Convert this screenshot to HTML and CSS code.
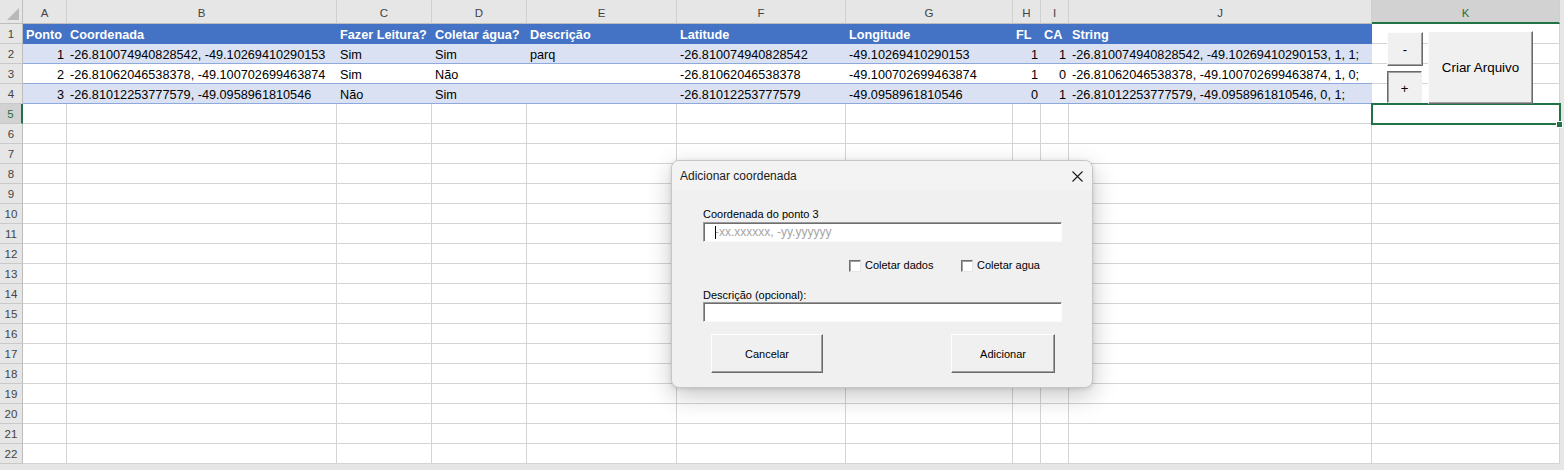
FILE: index.html
```html
<!DOCTYPE html>
<html lang="pt">
<head>
<meta charset="utf-8">
<title>Planilha</title>
<link rel="stylesheet" href="styles.css">
</head>
<body>
<div class="sheet">
  <div class="r hd"><span class="corner"></span><span>A</span><span>B</span><span>C</span><span>D</span><span>E</span><span>F</span><span>G</span><span>H</span><span>I</span><span>J</span><span class="sel">K</span></div>
  <div class="r"><span class="rh">1</span><span class="t th">Ponto</span><span class="t th">Coordenada</span><span class="t th">Fazer Leitura?</span><span class="t th">Coletar água?</span><span class="t th">Descrição</span><span class="t th">Latitude</span><span class="t th">Longitude</span><span class="t th">FL</span><span class="t th">CA</span><span class="t th">String</span><span></span></div>
  <div class="r"><span class="rh">2</span><span class="t band n">1</span><span class="t band">-26.810074940828542, -49.10269410290153</span><span class="t band">Sim</span><span class="t band">Sim</span><span class="t band">parq</span><span class="t band">-26.810074940828542</span><span class="t band">-49.10269410290153</span><span class="t band n">1</span><span class="t band n">1</span><span class="t band">-26.810074940828542, -49.10269410290153, 1, 1;</span><span></span></div>
  <div class="r"><span class="rh">3</span><span class="t n">2</span><span class="t">-26.81062046538378, -49.100702699463874</span><span class="t">Sim</span><span class="t">Não</span><span class="t"></span><span class="t">-26.81062046538378</span><span class="t">-49.100702699463874</span><span class="t n">1</span><span class="t n">0</span><span class="t">-26.81062046538378, -49.100702699463874, 1, 0;</span><span></span></div>
  <div class="r"><span class="rh">4</span><span class="t band n">3</span><span class="t band">-26.81012253777579, -49.0958961810546</span><span class="t band">Não</span><span class="t band">Sim</span><span class="t band"></span><span class="t band">-26.81012253777579</span><span class="t band">-49.0958961810546</span><span class="t band n">0</span><span class="t band n">1</span><span class="t band">-26.81012253777579, -49.0958961810546, 0, 1;</span><span></span></div>
  <div class="r"><span class="rh sel">5</span><span></span><span></span><span></span><span></span><span></span><span></span><span></span><span></span><span></span><span></span><span class="active"></span></div>
  <div class="r"><span class="rh">6</span><span></span><span></span><span></span><span></span><span></span><span></span><span></span><span></span><span></span><span></span><span></span></div>
  <div class="r"><span class="rh">7</span><span></span><span></span><span></span><span></span><span></span><span></span><span></span><span></span><span></span><span></span><span></span></div>
  <div class="r"><span class="rh">8</span><span></span><span></span><span></span><span></span><span></span><span></span><span></span><span></span><span></span><span></span><span></span></div>
  <div class="r"><span class="rh">9</span><span></span><span></span><span></span><span></span><span></span><span></span><span></span><span></span><span></span><span></span><span></span></div>
  <div class="r"><span class="rh">10</span><span></span><span></span><span></span><span></span><span></span><span></span><span></span><span></span><span></span><span></span><span></span></div>
  <div class="r"><span class="rh">11</span><span></span><span></span><span></span><span></span><span></span><span></span><span></span><span></span><span></span><span></span><span></span></div>
  <div class="r"><span class="rh">12</span><span></span><span></span><span></span><span></span><span></span><span></span><span></span><span></span><span></span><span></span><span></span></div>
  <div class="r"><span class="rh">13</span><span></span><span></span><span></span><span></span><span></span><span></span><span></span><span></span><span></span><span></span><span></span></div>
  <div class="r"><span class="rh">14</span><span></span><span></span><span></span><span></span><span></span><span></span><span></span><span></span><span></span><span></span><span></span></div>
  <div class="r"><span class="rh">15</span><span></span><span></span><span></span><span></span><span></span><span></span><span></span><span></span><span></span><span></span><span></span></div>
  <div class="r"><span class="rh">16</span><span></span><span></span><span></span><span></span><span></span><span></span><span></span><span></span><span></span><span></span><span></span></div>
  <div class="r"><span class="rh">17</span><span></span><span></span><span></span><span></span><span></span><span></span><span></span><span></span><span></span><span></span><span></span></div>
  <div class="r"><span class="rh">18</span><span></span><span></span><span></span><span></span><span></span><span></span><span></span><span></span><span></span><span></span><span></span></div>
  <div class="r"><span class="rh">19</span><span></span><span></span><span></span><span></span><span></span><span></span><span></span><span></span><span></span><span></span><span></span></div>
  <div class="r"><span class="rh">20</span><span></span><span></span><span></span><span></span><span></span><span></span><span></span><span></span><span></span><span></span><span></span></div>
  <div class="r"><span class="rh">21</span><span></span><span></span><span></span><span></span><span></span><span></span><span></span><span></span><span></span><span></span><span></span></div>
  <div class="r"><span class="rh">22</span><span></span><span></span><span></span><span></span><span></span><span></span><span></span><span></span><span></span><span></span><span></span></div>

  <div class="kbtn kminus">-</div>
  <div class="kbtn kplus">+</div>
  <div class="kbtn kcriar">Criar Arquivo</div>

  <div class="dlg">
    <div class="dlg-title">
      <span>Adicionar coordenada</span>
      <svg class="x" width="11" height="11" viewBox="0 0 11 11"><path d="M0.5 0.5L10.5 10.5M10.5 0.5L0.5 10.5" stroke="#1a1a1a" stroke-width="1.1" fill="none"/></svg>
    </div>
    <div class="dlg-body">
      <div class="lbl">Coordenada do ponto 3</div>
      <div class="inp caret"><span class="ph">-xx.xxxxxx, -yy.yyyyyy</span></div>
      <div class="chk-row">
        <div class="chk"><span class="box"></span>Coletar dados</div>
        <div class="chk"><span class="box"></span>Coletar agua</div>
      </div>
      <div class="lbl lbl2">Descrição (opcional):</div>
      <div class="inp"></div>
      <div class="btns">
        <div class="btn b1">Cancelar</div>
        <div class="btn b2">Adicionar</div>
      </div>
    </div>
  </div>
</div>
</body>
</html>
```
FILE: styles.css
```css
html, body {
  margin: 0;
  padding: 0;
}
body {
  background: #e6e6e6;
  font-family: "Liberation Sans", Arial, sans-serif;
  color: #000;
}
.sheet {
  position: relative;
  width: 1560px;
  background: #fff;
}
.r {
  display: grid;
  grid-template-columns: 23px 44px 270px 95px 95px 150px 169px 167px 28px 28px 303px 188px;
  grid-template-rows: 20px;
}
.r > * {
  box-sizing: border-box;
  border-right: 1px solid #d4d4d4;
  border-bottom: 1px solid #d4d4d4;
  font-size: 12.7px;
  line-height: 23px;
  padding: 0 3px;
  white-space: nowrap;
  overflow: visible;
}
/* column header row */
.r.hd {
  grid-template-rows: 24px;
}
.r.hd > * {
  background: #e6e6e6;
  border-right-color: #d0d0d0;
  border-bottom-color: #bdbdbd;
  text-align: center;
  font-size: 11.5px;
  line-height: 27px;
  color: #444;
  padding: 0;
}
.r.hd > .corner {
  position: relative;
  border-right-color: #bdbdbd;
}
.corner::after {
  content: "";
  position: absolute;
  right: 3px;
  bottom: 3px;
  width: 0;
  height: 0;
  border-left: 12px solid transparent;
  border-bottom: 12px solid #b8b8b8;
}
.r.hd > .sel {
  background: #d2d2d2;
  color: #217346;
  border-bottom: 2px solid #217346;
}
/* row header */
.r > .rh {
  background: #e6e6e6;
  border-right-color: #bdbdbd;
  border-bottom-color: #c9c9c9;
  text-align: center;
  font-size: 11.5px;
  line-height: 21px;
  color: #444;
  padding: 0;
}
.r > .rh.sel {
  background: #d2d2d2;
  border-right: 2px solid #217346;
  color: #217346;
}
/* table cells */
.r > .t {
  border-right: none;
  border-bottom-color: #8ea9db;
}
.r > .th {
  background: #4472c4;
  border-bottom-color: #4472c4;
  color: #fff;
  font-weight: bold;
}
.r > .band {
  background: #d9e1f2;
}
.r > .n {
  text-align: right;
}
/* active cell K5 */
.r > .active {
  position: relative;
}
.active::before {
  content: "";
  position: absolute;
  left: -1px;
  top: -1px;
  right: -2px;
  bottom: -2px;
  border: 2px solid #217346;
}
.active::after {
  content: "";
  position: absolute;
  right: -4px;
  bottom: -5px;
  width: 5px;
  height: 5px;
  background: #217346;
  border: 1px solid #fff;
}
/* floating buttons in column K */
.kbtn {
  position: absolute;
  box-sizing: border-box;
  background: #f0f0f0;
  display: flex;
  align-items: center;
  justify-content: center;
  font-family: "Liberation Sans", Arial, sans-serif;
  color: #000;
  border: 1px solid;
  border-color: #fdfdfd #6a6a6a #6a6a6a #fdfdfd;
  box-shadow: inset -1px -1px 0 #a0a0a0;
}
.kminus {
  left: 1387px;
  top: 32px;
  width: 36px;
  height: 34px;
  font-size: 13px;
}
.kplus {
  left: 1387px;
  top: 71px;
  width: 35px;
  height: 32px;
  font-size: 13px;
  border-color: #6a6a6a #f0f0f0 #f0f0f0 #6a6a6a;
  box-shadow: inset 1px 1px 0 #a0a0a0;
  padding-top: 2px;
}
.kcriar {
  left: 1428px;
  top: 31px;
  width: 105px;
  height: 73px;
  font-size: 13.4px;
}
/* dialog */
.dlg {
  position: absolute;
  left: 671px;
  top: 160px;
  width: 422px;
  height: 228px;
  box-sizing: border-box;
  background: #f0f0f0;
  border: 1px solid #c6c6c6;
  border-radius: 8px;
  box-shadow: 0 8px 24px rgba(0, 0, 0, 0.22), 0 1px 4px rgba(0, 0, 0, 0.12);
  overflow: hidden;
  font-size: 11px;
}
.dlg-title {
  height: 29px;
  display: flex;
  align-items: center;
  justify-content: space-between;
  padding: 0 9px 0 8px;
  background: #f3f3f3;
  font-size: 12px;
  color: #1a1a1a;
}
.dlg-title .x {
  display: block;
  margin-top: 1px;
}
.dlg-body {
  padding: 17px 30px 0 31px;
}
.lbl {
  line-height: 14px;
  height: 14px;
  margin-bottom: 1px;
  white-space: nowrap;
}
.lbl2 {
  margin-top: 16px;
  margin-bottom: 0;
}
.inp {
  position: relative;
  box-sizing: border-box;
  width: 359px;
  height: 20px;
  background: #fff;
  border: 1px solid;
  border-color: #9a9a9a #fafafa #fafafa #9a9a9a;
  box-shadow: inset 1px 1px 0 #6e6e6e;
  display: flex;
  align-items: center;
}
.caret::before {
  content: "";
  position: absolute;
  left: 11px;
  top: 3px;
  width: 1px;
  height: 13px;
  background: #000;
}
.ph {
  padding-left: 11px;
  font-size: 12px;
  color: #a6a6a6;
  white-space: nowrap;
}
.chk-row {
  display: flex;
  margin-top: 17px;
  padding-left: 146px;
  height: 13px;
}
.chk {
  flex: 0 0 auto;
  display: flex;
  align-items: center;
  gap: 4px;
  width: 112px;
  white-space: nowrap;
  line-height: 13px;
}
.box {
  flex: 0 0 auto;
  box-sizing: border-box;
  width: 12px;
  height: 12px;
  background: #fff;
  border: 1px solid;
  border-color: #6e6e6e #e6e6e6 #e6e6e6 #6e6e6e;
  box-shadow: inset 1px 1px 0 #a0a0a0;
}
.btns {
  display: flex;
  gap: 128px;
  margin-top: 12px;
  padding-left: 8px;
}
.btn {
  flex: 0 0 auto;
  box-sizing: border-box;
  height: 39px;
  display: flex;
  align-items: center;
  justify-content: center;
  background: #f0f0f0;
  border: 1px solid;
  border-color: #fdfdfd #6a6a6a #6a6a6a #fdfdfd;
  box-shadow: inset -1px -1px 0 #a0a0a0;
}
.b1 {
  width: 112px;
}
.b2 {
  width: 104px;
}
```
